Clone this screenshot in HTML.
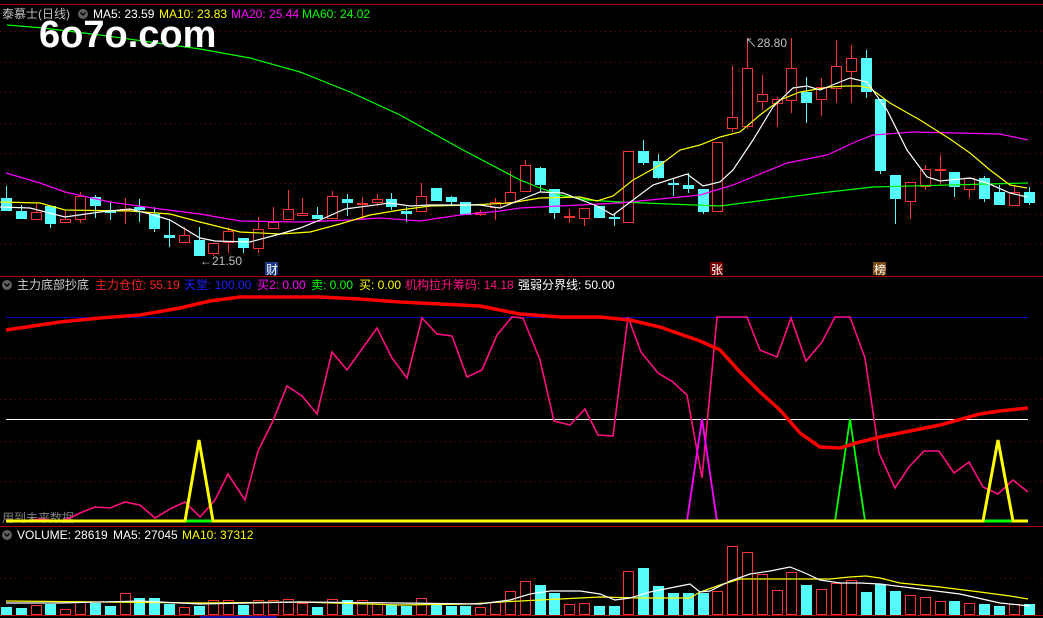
<!DOCTYPE html>
<html><head><meta charset="utf-8">
<style>
html,body{margin:0;padding:0;background:#000;}
body{width:1043px;height:618px;overflow:hidden;position:relative;font-family:"Liberation Sans","Noto Sans CJK SC",sans-serif;}
svg{position:absolute;left:0;top:0;}
.t{font-family:"Liberation Sans","Noto Sans CJK SC",sans-serif;font-size:12px;}
</style></head>
<body>
<svg id="s" width="1043" height="618" viewBox="0 0 1043 618" xmlns="http://www.w3.org/2000/svg">
<rect width="1043" height="618" fill="#000"/>
<g id="grid" stroke="#8b0000" stroke-width="1" stroke-dasharray="1,4" shape-rendering="crispEdges">
<line x1="0" y1="31.5" x2="1043" y2="31.5"/><line x1="0" y1="62.5" x2="1043" y2="62.5"/>
<line x1="0" y1="92.5" x2="1043" y2="92.5"/><line x1="0" y1="123.5" x2="1043" y2="123.5"/>
<line x1="0" y1="153.5" x2="1043" y2="153.5"/><line x1="0" y1="183.5" x2="1043" y2="183.5"/>
<line x1="0" y1="214.5" x2="1043" y2="214.5"/><line x1="0" y1="244.5" x2="1043" y2="244.5"/>
<line x1="0" y1="358.5" x2="1043" y2="358.5"/><line x1="0" y1="399.5" x2="1043" y2="399.5"/>
<line x1="0" y1="441.5" x2="1043" y2="441.5"/><line x1="0" y1="481.5" x2="1043" y2="481.5"/>
<line x1="0" y1="578.5" x2="1043" y2="578.5"/>
</g>
<g stroke="#b00000" stroke-width="1" shape-rendering="crispEdges">
<line x1="0" y1="4.5" x2="1043" y2="4.5"/>
<line x1="0" y1="276.5" x2="1043" y2="276.5"/>
<line x1="0" y1="526.5" x2="1043" y2="526.5"/>
<line x1="0" y1="615.5" x2="1043" y2="615.5"/>
</g>
<rect x="200" y="616" width="77" height="2" fill="#1010a0"/>
<g id="cand"></g>
<g fill="none" stroke-width="1.2">
<polyline stroke="#00ff00" points="7,25 43,28 100,35 150,42 200,49 250,58 300,72 350,92 400,115 463,150 520,180 540,188 560,195 587,200 620,202 720,206 820,193 873,187 1028,183"/>
<polyline stroke="#ff00ff" points="6,173 40,183 65,192 110,202 160,209 200,214 240,221 300,222 350,220 380,218 420,221 460,215 500,211 520,208 620,203 700,195 733,185 787,163 827,155 853,143 873,135 913,132 1000,134 1028,140"/>
<polyline stroke="#ffff00" points="0,202 40,203 65,210 130,211 170,214 200,222 240,232 280,234 310,232 340,224 370,215 400,210 430,206 470,205 510,203 540,198 580,197 597,201 613,196 633,180 660,165 680,150 700,145 720,137 740,132 760,115 780,100 800,92 830,87 847,86 860,86 870,88 890,103 920,120 950,139 970,153 990,170 1010,185 1027,188"/>
<polyline stroke="#ffffff" points="0,207 30,208 65,217 100,212 130,209 150,214 170,220 200,238 215,241 250,242 280,234 300,228 320,220 345,209 390,203 410,206 430,205 480,205 500,208 520,200 540,192 563,193 597,206 613,215 633,200 653,185 687,174 703,186 720,182 733,170 753,140 773,107 793,88 807,86 820,90 840,82 850,78 867,82 887,110 907,150 927,177 940,181 970,178 987,183 1010,193 1027,197"/>
</g>
<text x="200" y="265" class="t" fill="#c0c0c0">←21.50</text>
<text x="745" y="47" class="t" fill="#c0c0c0">↖28.80</text>
<rect x="265" y="262" width="13" height="13" fill="#1a3a8a"/><text x="266" y="274" class="t" fill="#fff" font-size="11">财</text>
<rect x="710" y="262" width="13" height="13" fill="#7a0000"/><text x="711" y="274" class="t" fill="#fff" font-size="11">张</text>
<rect x="873" y="262" width="13" height="13" fill="#7a4a10"/><text x="874" y="274" class="t" fill="#fff" font-size="11">榜</text>

<text x="2" y="18" class="t" fill="#c0c0c0" font-size="13">泰慕士(日线)</text>
<circle cx="83" cy="14" r="5" fill="#606060"/><path d="M80.5,12.5 L83,15 L85.5,12.5" stroke="#000" stroke-width="1.4" fill="none"/>
<text x="93" y="18" class="t" fill="#fff">MA5: 23.59</text>
<text x="159" y="18" class="t" fill="#ffff00">MA10: 23.83</text>
<text x="231" y="18" class="t" fill="#ff00ff">MA20: 25.44</text>
<text x="302" y="18" class="t" fill="#00ff00">MA60: 24.02</text>
<text x="39" y="47" fill="#fff" font-family="Liberation Sans,sans-serif" font-weight="bold" font-size="38">6o7o.com</text>

<circle cx="7" cy="285" r="5" fill="#606060"/><path d="M4.5,283.5 L7,286 L9.5,283.5" stroke="#000" stroke-width="1.4" fill="none"/>
<text x="17" y="289" class="t" fill="#d0d0d0">主力底部抄底</text>
<text x="95" y="289" class="t" fill="#ff2020">主力仓位: 55.19</text>
<text x="184" y="289" class="t" fill="#2020ff">天堂: 100.00</text>
<text x="257" y="289" class="t" fill="#ff00ff">买2: 0.00</text>
<text x="311" y="289" class="t" fill="#00ff00">卖: 0.00</text>
<text x="359" y="289" class="t" fill="#ffff00">买: 0.00</text>
<text x="405" y="289" class="t" fill="#ff1080">机构拉升筹码: 14.18</text>
<text x="518" y="289" class="t" fill="#fff">强弱分界线: 50.00</text>
<line x1="6" y1="317.5" x2="1028" y2="317.5" stroke="#0000c0" stroke-width="1"/>
<line x1="6" y1="419.5" x2="1028" y2="419.5" stroke="#ffffff" stroke-width="1"/>
<text x="2" y="522" class="t" fill="#808080" font-size="12">用到未来数据</text>
<polyline fill="none" stroke="#ff1080" stroke-width="1.6" points="6,520 25,521 40,519 60,521 70,518 80,513 95,507 110,508 125,502 140,505 155,518 170,509 185,502 200,517 215,500 228,474 245,500 258,451 272,423 287,386 302,396 317,414 332,352 347,370 362,349 377,328 392,358 407,378 422,318 437,334 452,336 467,377 482,370 497,335 512,317 523,318 540,360 554,421 570,425 585,409 598,435 613,436 628,317 641,352 658,373 673,382 687,395 702,478 717,317 747,317 760,350 777,357 791,318 806,361 822,342 835,317 850,317 865,358 879,453 895,488 909,467 924,451 939,451 954,473 969,462 983,487 998,494 1013,480 1028,492"/>
<polyline fill="none" stroke="#ff00ff" stroke-width="1.8" points="687,521 702,419 717,521"/>
<polyline fill="none" stroke="#00ff00" stroke-width="1.8" points="835,521 850,419 865,521"/>
<line x1="186" y1="521" x2="212" y2="521" stroke="#00ff00" stroke-width="3"/>
<line x1="983" y1="521" x2="1013" y2="521" stroke="#00ff00" stroke-width="3"/>
<polyline fill="none" stroke="#ffff00" stroke-width="3" points="6,521 185,521 199,440 213,521 983,521 998,440 1013,521 1028,521"/>
<polyline fill="none" stroke="#ff0000" stroke-width="3.5" points="6,330 60,322 100,318 140,315 180,308 210,301 240,297 280,297 320,297 360,299 400,302 440,304 480,306 520,314 560,317 600,317 630,320 660,327 700,341 720,350 740,372 760,392 780,410 800,433 820,447 840,448 860,442 880,437 900,433 940,425 980,414 1000,411 1028,408"/>

<circle cx="7" cy="535" r="5" fill="#606060"/><path d="M4.5,533.5 L7,536 L9.5,533.5" stroke="#000" stroke-width="1.4" fill="none"/>
<text x="17" y="539" class="t" fill="#fff">VOLUME: 28619</text>
<text x="113" y="539" class="t" fill="#fff">MA5: 27045</text>
<text x="182" y="539" class="t" fill="#ffff00">MA10: 37312</text>
<g id="vol"></g>
<polyline fill="none" stroke="#ffff00" stroke-width="1.2" points="6,601 200,603 300,602 400,605 470,604 500,602 540,600 600,597 640,598 690,598 700,592 720,585 740,579 760,579 800,579 830,579 850,577 866,576 880,578 900,583 940,587 980,592 1010,596 1028,599"/>
<polyline fill="none" stroke="#ffffff" stroke-width="1.2" points="6,603 60,603 140,601 200,604 300,602 400,603 480,604 510,600 530,594 550,591 580,591 600,594 615,600 630,598 650,592 680,586 690,584 700,592 710,591 730,581 750,574 770,571 790,567 805,573 820,580 840,583 860,583 880,584 920,589 960,594 1000,603 1030,606"/>
</svg>
<script>
var C=[[198,211,186,211,'c'],[211,219,205,219,'c'],[212,220,204,220,'r'],[206,224,206,228,'c'],[219,223,211,223,'r'],[196,220,192,223,'r'],[197,206,195,218,'c'],[210,213,202,220,'c'],[209,211,198,224,'r'],[207,210,199,222,'c'],[214,229,207,232,'c'],[235,238,220,247,'c'],[235,243,227,243,'r'],[240,256,227,256,'c'],[243,254,243,256,'r'],[231,243,227,253,'r'],[238,248,238,253,'c'],[229,249,217,253,'r'],[222,229,207,229,'r'],[209,220,190,220,'r'],[213,216,198,216,'r'],[215,219,207,219,'c'],[196,219,191,219,'r'],[199,203,194,216,'c'],[203,204,197,220,'r'],[199,203,194,206,'r'],[199,207,193,210,'c'],[211,214,207,222,'c'],[196,212,183,212,'r'],[188,201,188,201,'c'],[197,202,196,205,'c'],[202,215,202,215,'c'],[212,215,210,216,'r'],[202,208,198,220,'r'],[192,203,171,203,'r'],[165,192,160,192,'r'],[168,185,167,192,'c'],[189,213,189,219,'c'],[216,217,209,223,'r'],[208,219,208,226,'r'],[206,218,206,218,'c'],[217,219,214,226,'c'],[151,223,151,223,'r'],[151,163,140,165,'c'],[161,178,154,179,'c'],[183,185,178,196,'c'],[185,189,173,193,'c'],[189,212,189,214,'c'],[142,212,142,212,'r'],[117,129,66,132,'r'],[68,127,38,129,'r'],[94,102,75,110,'r'],[99,104,97,127,'r'],[68,101,38,113,'r'],[92,103,77,123,'c'],[87,100,78,116,'r'],[66,89,40,103,'r'],[58,72,45,103,'r'],[58,92,50,98,'c'],[99,171,99,174,'c'],[175,199,175,224,'c'],[182,202,182,219,'r'],[169,187,165,190,'r'],[169,171,155,185,'r'],[172,187,172,197,'c'],[178,190,178,198,'r'],[178,199,176,202,'c'],[192,205,185,205,'c'],[192,206,185,206,'r'],[192,203,187,205,'c']];
var V=[607,608,605,604,609,602,603,606,593,598,598,604,607,606,600,600,605,600,600,599,603,607,599,600,600,602,605,606,598,603,606,606,607,602,591,581,585,593,604,603,606,606,571,568,586,593,593,593,591,546,552,574,590,572,585,589,583,580,592,584,591,595,597,601,601,603,604,606,604,604];
var cy="#54fcfc",rd="#ff3232",h="",v="";
for(var i=0;i<C.length;i++){var c=C[i],x=Math.round(6+14.82*i),col=c[4]=='c'?cy:rd;
h+='<line x1="'+(x+.5)+'" y1="'+c[2]+'" x2="'+(x+.5)+'" y2="'+c[3]+'" stroke="'+col+'"/>';
if(c[4]=='c'){h+='<rect x="'+(x-5)+'" y="'+c[0]+'" width="11" height="'+Math.max(1,c[1]-c[0])+'" fill="'+cy+'"/>';}
else if(c[1]-c[0]<=2){h+='<rect x="'+(x-5)+'" y="'+c[0]+'" width="11" height="2" fill="'+rd+'"/>';}
else{h+='<rect x="'+(x-4.5)+'" y="'+(c[0]+.5)+'" width="10" height="'+(c[1]-c[0]-1)+'" fill="#000" stroke="'+rd+'"/>';}
var t=V[i];
if(c[4]=='c')v+='<rect x="'+(x-5)+'" y="'+t+'" width="11" height="'+(615-t)+'" fill="'+cy+'"/>';
else v+='<rect x="'+(x-4.5)+'" y="'+(t+.5)+'" width="10" height="'+(614-t)+'" fill="none" stroke="'+rd+'"/>';}
document.getElementById('cand').innerHTML=h;document.getElementById('vol').innerHTML=v;
</script>
</body></html>
